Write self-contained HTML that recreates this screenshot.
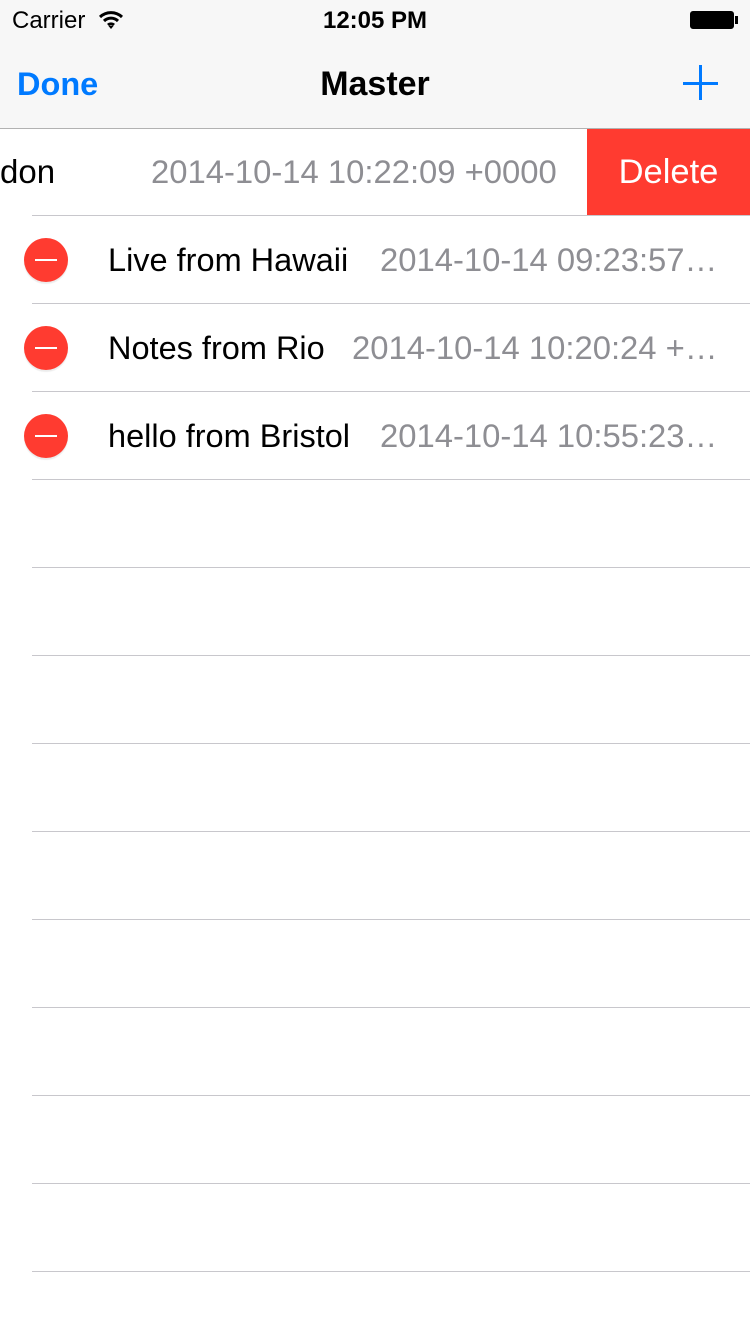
<!DOCTYPE html>
<html><head><meta charset="utf-8"><style>
body{margin:0;width:750px;height:1334px;background:#fff;position:relative;overflow:hidden;font-family:"Liberation Sans",sans-serif;}
.a{position:absolute;white-space:nowrap;}
.sep{position:absolute;left:32px;right:0;height:1px;background:#c8c7cc;}
.t{position:absolute;font-size:32.5px;color:#000;line-height:40px;white-space:nowrap;}
.d{position:absolute;font-size:32.8px;color:#8e8e93;line-height:40px;white-space:nowrap;}
.m{position:absolute;left:24px;width:44px;height:44px;border-radius:50%;background:#ff3b30;box-shadow:0 2px 1px rgba(0,0,0,0.08);}
.m:after{content:"";position:absolute;left:11px;top:21px;width:22px;height:2px;background:#fff;}
</style></head><body>
<div class="a" style="left:0;top:0;width:750px;height:128px;background:#f7f7f7;border-bottom:1px solid #b2b2b2;"></div>
<div class="a" style="left:12px;top:6px;font-size:24px;line-height:30px;">Carrier</div>
<svg class="a" style="left:98px;top:10px" width="26" height="20" viewBox="0 0 26 20"><path d="M2 7a16 16 0 0 1 22 0M6 11a10 10 0 0 1 14 0M10 15a4.5 4.5 0 0 1 6 0" stroke="#000" stroke-width="3" fill="none"/><path d="M10.5 16L13 19L15.5 16Z" fill="#000"/></svg>
<div class="a" style="left:0;width:750px;text-align:center;top:6px;font-size:24px;line-height:30px;font-weight:bold;">12:05 PM</div>
<div class="a" style="left:690px;top:11px;width:42px;height:16px;border:1.5px solid #000;border-radius:3px;background:#000;"></div>
<div class="a" style="left:735px;top:16px;width:3px;height:8px;background:#000;"></div>
<div class="a" style="left:17px;top:64px;font-size:32.5px;line-height:40px;color:#007aff;font-weight:bold;">Done</div>
<div class="a" style="left:0;width:750px;text-align:center;top:64px;font-size:34px;line-height:40px;font-weight:bold;">Master</div>
<div class="a" style="left:683px;top:82px;width:35px;height:3px;background:#007aff;"></div>
<div class="a" style="left:699px;top:65px;width:3px;height:35px;background:#007aff;"></div>

<div class="t" style="left:0;top:152px;font-size:33px;">don</div>
<div class="d" style="left:151px;top:152px;">2014-10-14 10:22:09 +0000</div>
<div class="a" style="left:587px;top:129px;width:163px;height:86px;background:#ff3b30;color:#fff;font-size:34.5px;line-height:86px;text-align:center;">Delete</div>

<div class="m" style="top:238px"></div>
<div class="t" style="left:108px;top:240px;">Live from Hawaii</div>
<div class="d" style="left:380px;top:240px;">2014-10-14 09:23:57…</div>
<div class="m" style="top:326px"></div>
<div class="t" style="left:108px;top:328px;">Notes from Rio</div>
<div class="d" style="left:352px;top:328px;">2014-10-14 10:20:24 +…</div>
<div class="m" style="top:414px"></div>
<div class="t" style="left:108px;top:416px;">hello from Bristol</div>
<div class="d" style="left:380px;top:416px;">2014-10-14 10:55:23…</div>

<div class="sep" style="top:215px"></div>
<div class="sep" style="top:303px"></div>
<div class="sep" style="top:391px"></div>
<div class="sep" style="top:479px"></div>
<div class="sep" style="top:567px"></div>
<div class="sep" style="top:655px"></div>
<div class="sep" style="top:743px"></div>
<div class="sep" style="top:831px"></div>
<div class="sep" style="top:919px"></div>
<div class="sep" style="top:1007px"></div>
<div class="sep" style="top:1095px"></div>
<div class="sep" style="top:1183px"></div>
<div class="sep" style="top:1271px"></div>
</body></html>
